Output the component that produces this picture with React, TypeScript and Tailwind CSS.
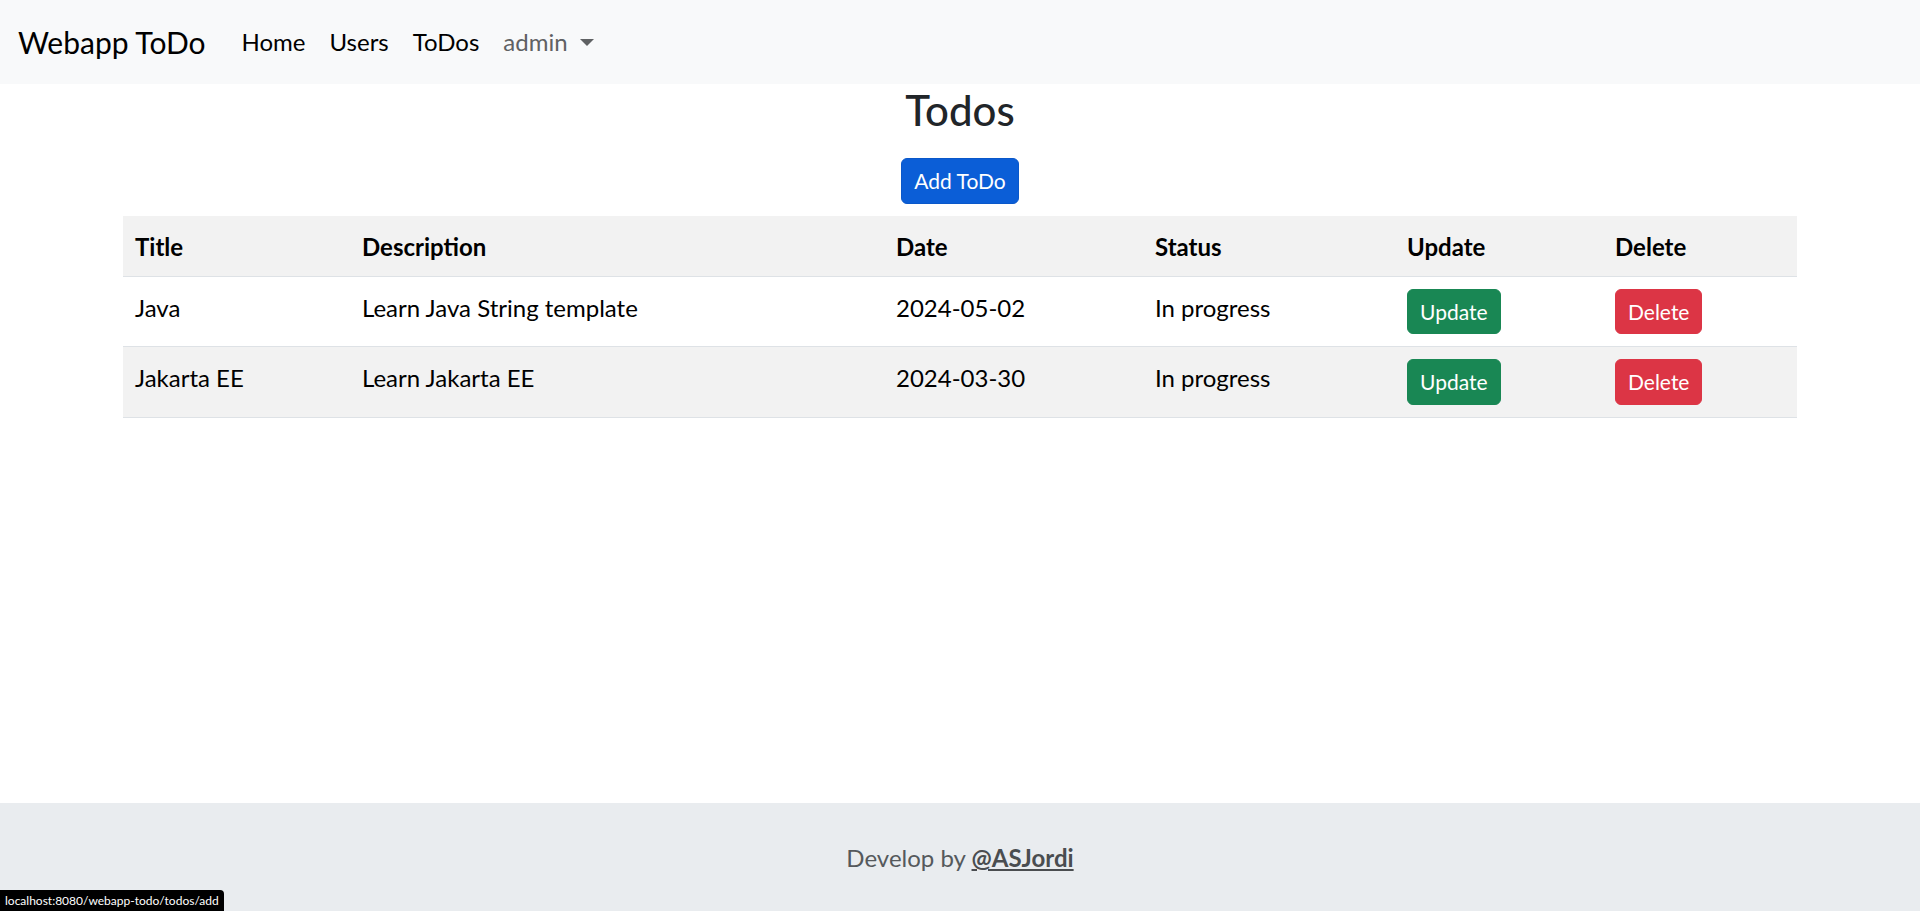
import React from "react";

const todos = [
  { title: "Java", description: "Learn Java String template", date: "2024-05-02", status: "In progress" },
  { title: "Jakarta EE", description: "Learn Jakarta EE", date: "2024-03-30", status: "In progress" },
];

export default function App() {
  return (
    <div className="relative flex min-h-screen flex-col bg-white font-['Lato',sans-serif] text-[24px] leading-[36px] text-[#212529]">
      <nav className="flex h-[84px] items-center bg-[#f8f9fa] px-[18px]">
        <a className="mr-[24px] text-[30px] leading-[45px] text-black">Webapp ToDo</a>
        <ul className="flex items-center">
          <li><a className="block px-[12px] py-[12px] text-black">Home</a></li>
          <li><a className="block px-[12px] py-[12px] text-black">Users</a></li>
          <li><a className="block px-[12px] py-[12px] text-black">ToDos</a></li>
          <li>
            <a className="flex items-center px-[12px] py-[12px] text-[#5f6163]">
              admin
              <span className="ml-[12px] inline-block h-0 w-0 border-x-[7px] border-t-[7px] border-x-transparent border-t-[#5f6163]" />
            </a>
          </li>
        </ul>
      </nav>

      <main className="flex-1">
        <div className="mx-auto w-full max-w-[1710px] px-[18px]">
          <h3 className="pt-[1px] text-center text-[42px] font-medium leading-[50.4px] text-[#212529]">Todos</h3>
          <div className="mt-[23px] flex justify-center">
            <button className="rounded-[6px] border border-[#0a58ca] bg-[#0b5ed7] px-[12px] py-[6px] text-[21px] leading-[31.5px] text-white">
              Add ToDo
            </button>
          </div>
          <table className="mt-[12px] w-full table-fixed border-collapse text-black">
            <colgroup>
              <col className="w-[227px]" />
              <col className="w-[534px]" />
              <col className="w-[259px]" />
              <col className="w-[252px]" />
              <col className="w-[208px]" />
              <col className="w-[194px]" />
            </colgroup>
            <thead>
              <tr className="border-b border-[#dee2e6] bg-[#f2f2f2] text-left">
                <th className="px-[12px] pt-[13px] pb-[11px] align-top font-bold">Title</th>
                <th className="px-[12px] pt-[13px] pb-[11px] align-top font-bold">Description</th>
                <th className="px-[12px] pt-[13px] pb-[11px] align-top font-bold">Date</th>
                <th className="px-[12px] pt-[13px] pb-[11px] align-top font-bold">Status</th>
                <th className="px-[12px] pt-[13px] pb-[11px] align-top font-bold">Update</th>
                <th className="px-[12px] pt-[13px] pb-[11px] align-top font-bold">Delete</th>
              </tr>
            </thead>
            <tbody>
              {todos.map((t, i) => (
                <tr key={t.title} className={`border-b border-[#dee2e6] ${i % 2 === 1 ? "bg-[#f2f2f2]" : "bg-white"}`}>
                  <td className="px-[12px] pt-[13px] pb-[11px] align-top">{t.title}</td>
                  <td className="px-[12px] pt-[13px] pb-[11px] align-top">{t.description}</td>
                  <td className="px-[12px] pt-[13px] pb-[11px] align-top">{t.date}</td>
                  <td className="px-[12px] pt-[13px] pb-[11px] align-top">{t.status}</td>
                  <td className="p-[12px] align-top">
                    <button className="block rounded-[6px] border border-[#198754] bg-[#198754] px-[12px] py-[6px] text-[21px] leading-[31.5px] text-white">
                      Update
                    </button>
                  </td>
                  <td className="p-[12px] align-top">
                    <button className="block rounded-[6px] border border-[#dc3545] bg-[#dc3545] px-[12px] py-[6px] text-[21px] leading-[31.5px] text-white">
                      Delete
                    </button>
                  </td>
                </tr>
              ))}
            </tbody>
          </table>
        </div>
      </main>

      <footer className="bg-[#e9ecef] pt-[37px] pb-[35px] text-center text-[#55595c]">
        Develop by{" "}
        <a className="font-bold text-[#4a4d50] underline">@ASJordi</a>
      </footer>

      <div className="absolute bottom-0 left-0 flex h-[21px] items-center rounded-tr-[4px] bg-black px-[5px] text-[12px] leading-[16px] text-white">
        localhost:8080/webapp-todo/todos/add
      </div>
    </div>
  );
}
